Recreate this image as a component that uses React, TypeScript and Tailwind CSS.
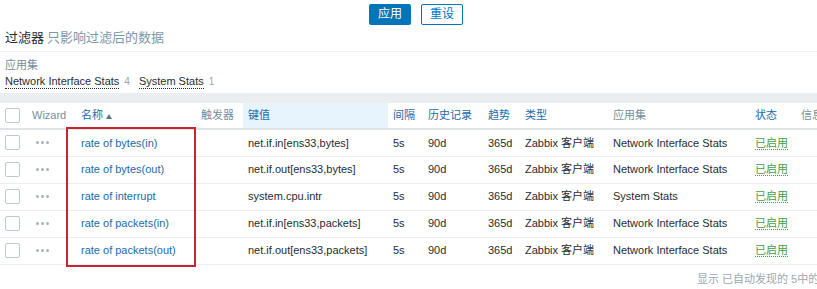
import React from 'react'

const rows = [
  { name: 'rate of bytes(in)', key: 'net.if.in[ens33,bytes]', app: 'Network Interface Stats' },
  { name: 'rate of bytes(out)', key: 'net.if.out[ens33,bytes]', app: 'Network Interface Stats' },
  { name: 'rate of interrupt', key: 'system.cpu.intr', app: 'System Stats' },
  { name: 'rate of packets(in)', key: 'net.if.in[ens33,packets]', app: 'Network Interface Stats' },
  { name: 'rate of packets(out)', key: 'net.if.out[ens33,packets]', app: 'Network Interface Stats' },
]

function Box() {
  return <span className="block w-[15px] h-[15px] border border-[#bfc8ce] rounded-[2px] bg-white" />
}

function Dots() {
  return (
    <span className="flex gap-[2px] items-center">
      <span className="w-[3px] h-[3px] rounded-full bg-[#a9b3b9]" />
      <span className="w-[3px] h-[3px] rounded-full bg-[#a9b3b9]" />
      <span className="w-[3px] h-[3px] rounded-full bg-[#a9b3b9]" />
    </span>
  )
}

export default function App() {
  return (
    <div className="w-[817px] h-[289px] overflow-hidden bg-white text-[11px] text-[#1f2c33] font-['Liberation_Sans','Noto_Sans_CJK_SC',sans-serif]">
      {/* filter */}
      <div className="h-[93px]">
        <div className="flex justify-center gap-[10px] pt-[4px] pl-[15px]">
          <button className="w-[42px] h-[21px] bg-[#0275b8] text-white rounded-[2px] text-[12px] leading-[21px]">应用</button>
          <button className="w-[42px] h-[21px] bg-white text-[#0275b8] border border-[#0275b8] rounded-[2px] text-[12px] leading-[19px]">重设</button>
        </div>
        <div className="mt-[5px] pl-[5px] text-[13px] leading-[16px]">
          <span className="text-[#1f2c33]">过滤器</span>
          <span className="text-[#7d97a6] ml-[3px]">只影响过滤后的数据</span>
        </div>
        <div className="mt-[5px] h-px bg-[#eef0f1]" />
        <div className="pl-[5px] mt-[7px] text-[11px] leading-[13px] text-[#768d99]">应用集</div>
        <div className="pl-[5px] mt-[2px] flex items-baseline leading-[14px] text-[11px]">
          <span className="border-b border-dotted border-[#1f2c33] text-[#1f2c33]">Network Interface Stats</span>
          <span className="ml-[5px] text-[#9aa7af] text-[10px]">4</span>
          <span className="ml-[9px] border-b border-dotted border-[#1f2c33] text-[#1f2c33]">System Stats</span>
          <span className="ml-[5px] text-[#9aa7af] text-[10px]">1</span>
        </div>
      </div>
      <div className="h-[10px] bg-[#ebeef0]" />

      {/* table */}
      <div className="relative">
        <table className="table-fixed w-[860px] border-collapse">
          <colgroup>
            <col className="w-[27px]" />
            <col className="w-[49px]" />
            <col className="w-[120px]" />
            <col className="w-[47px]" />
            <col className="w-[145px]" />
            <col className="w-[35px]" />
            <col className="w-[60px]" />
            <col className="w-[37px]" />
            <col className="w-[88px]" />
            <col className="w-[142px]" />
            <col className="w-[46px]" />
            <col className="w-[64px]" />
          </colgroup>
          <thead>
            <tr className="h-[26px] border-b-2 border-[#dfe4e7] text-left">
              <th className="pl-[5px] font-normal"><Box /></th>
              <th className="pl-[5px] font-normal text-[#768d99]">Wizard</th>
              <th className="pl-[5px] font-normal text-[#1b6aa9]">
                名称<span className="inline-block ml-[3px] align-middle w-0 h-0 border-l-[3px] border-r-[3px] border-b-[5px] border-l-transparent border-r-transparent border-b-[#5d7585]" />
              </th>
              <th className="pl-[5px] font-normal text-[#768d99]">触发器</th>
              <th className="pl-[5px] font-normal text-[#1b6aa9] bg-[#e8f4fd]">键值</th>
              <th className="pl-[5px] font-normal text-[#1b6aa9]">间隔</th>
              <th className="pl-[5px] font-normal text-[#1b6aa9]">历史记录</th>
              <th className="pl-[5px] font-normal text-[#1b6aa9]">趋势</th>
              <th className="pl-[5px] font-normal text-[#1b6aa9]">类型</th>
              <th className="pl-[5px] font-normal text-[#768d99]">应用集</th>
              <th className="pl-[5px] font-normal text-[#1b6aa9]">状态</th>
              <th className="pl-[5px] font-normal text-[#768d99]">信息</th>
            </tr>
          </thead>
          <tbody>
            {rows.map((r) => (
              <tr key={r.name} className="h-[27px] border-b border-[#ebeef0]">
                <td className="pl-[5px]"><Box /></td>
                <td className="pl-[9px]"><Dots /></td>
                <td className="pl-[5px] text-[#1b6aa9]">{r.name}</td>
                <td className="pl-[5px]" />
                <td className="pl-[5px]">{r.key}</td>
                <td className="pl-[5px]">5s</td>
                <td className="pl-[5px]">90d</td>
                <td className="pl-[5px]">365d</td>
                <td className="pl-[5px]">Zabbix 客户端</td>
                <td className="pl-[5px]">{r.app}</td>
                <td className="pl-[5px]">
                  <span className="text-[#429e47] border-b border-dotted border-[#429e47]">已启用</span>
                </td>
                <td className="pl-[5px]" />
              </tr>
            ))}
          </tbody>
        </table>
        <div className="absolute left-[66px] top-[24px] w-[130px] h-[140px] border-2 border-[#c4262e] pointer-events-none" />
        <div className="pl-[697px] pt-[6px] text-[11px] text-[#9aa7af] whitespace-nowrap">显示 已自动发现的 5中的</div>
      </div>
    </div>
  )
}
